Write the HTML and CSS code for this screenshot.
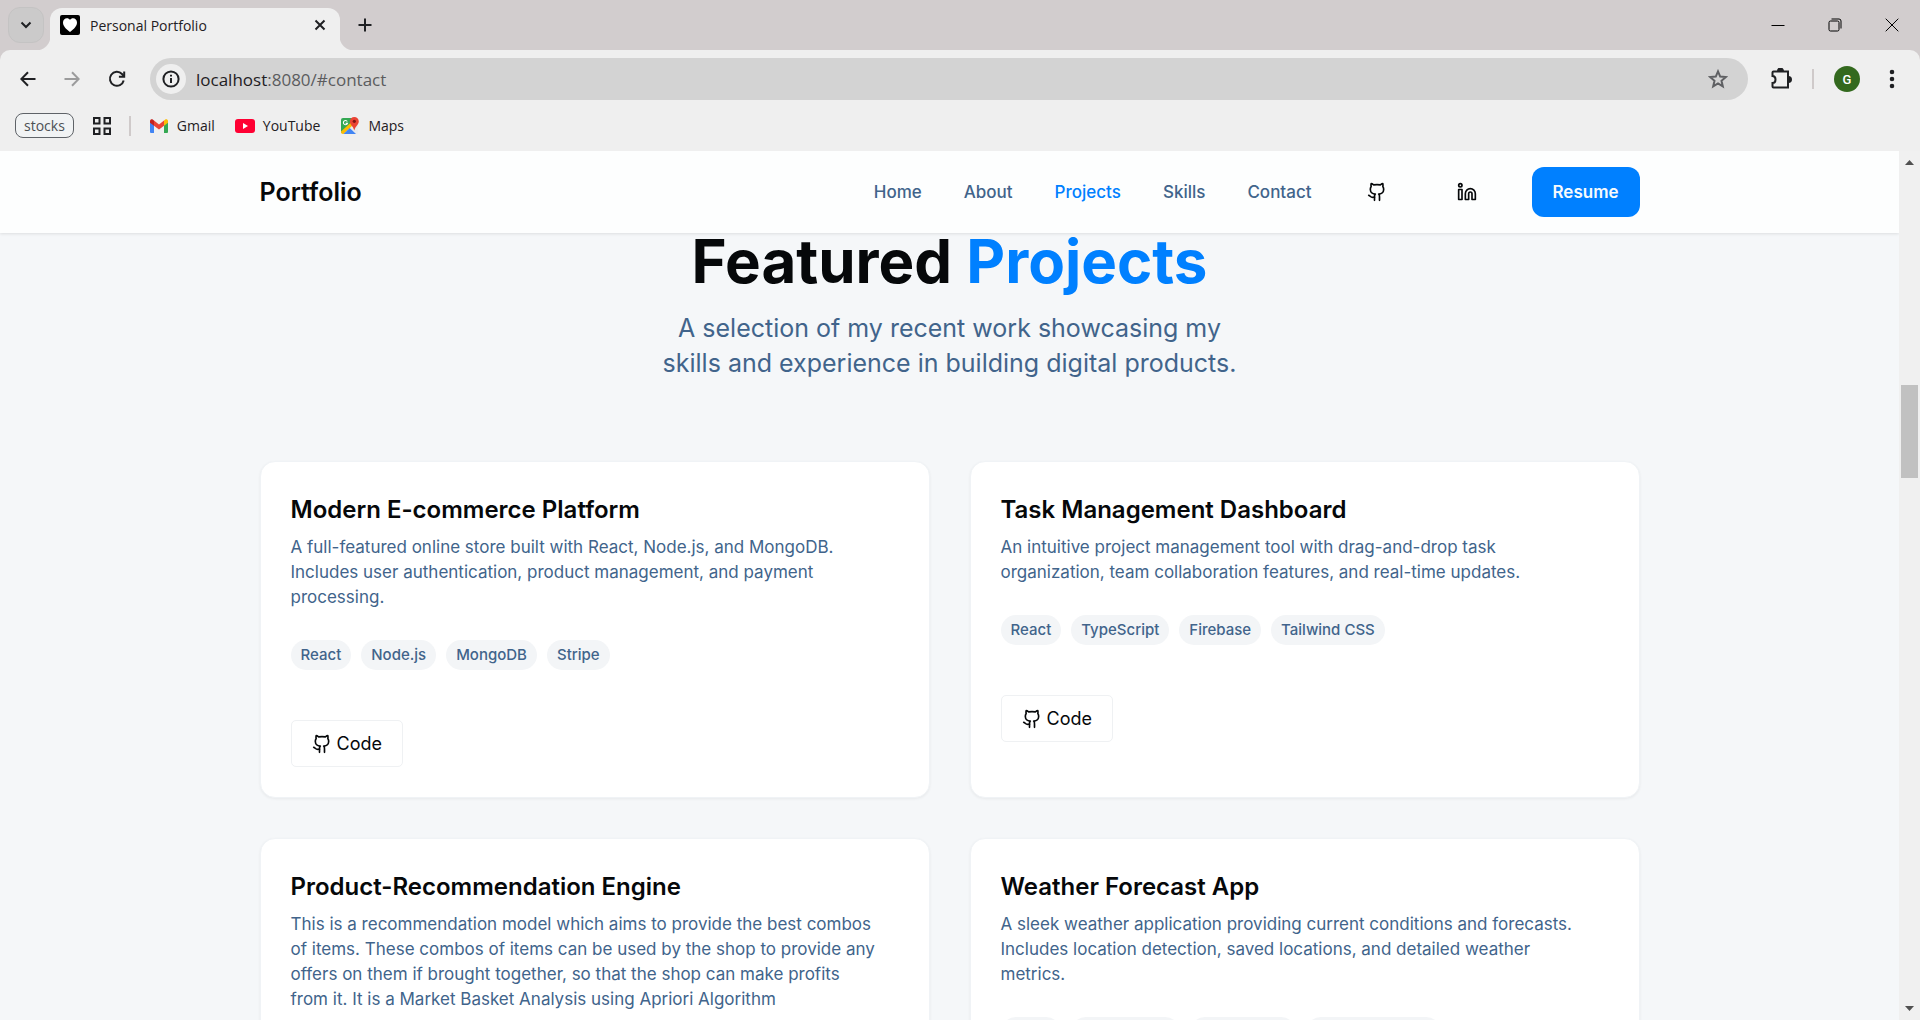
FILE: index.html
```html
<!DOCTYPE html>
<html lang="en">
<head>
<meta charset="utf-8">
<title>Personal Portfolio</title>
<link rel="stylesheet" href="styles.css">
</head>
<body>
<svg class="sprite" aria-hidden="true">
  <symbol id="github" viewBox="0 0 24 24"><path d="M15 22v-4a4.800 4.800 0 0 0-1-3.500c3 0 6-2 6-5.500.08-1.250-.27-2.480-1-3.500.28-1.150.28-2.350 0-3.500 0 0-1 0-3 1.500-2.640-.5-5.360-.5-8 0C6 2 5 2 5 2c-.3 1.150-.3 2.350 0 3.500A5.403 5.403 0 0 0 4 9c0 3.500 3 5.500 6 5.500-.39.490-.68 1.050-.85 1.650-.17.600-.22 1.230-.15 1.850v4"/><path d="M9 18c-4.510 2-5-2-7-2"/></symbol>
</svg>
<div class="browser">
  <div class="tabstrip">
    <button class="tab-search" aria-label="Search tabs"><svg width="12" height="12" viewBox="0 0 12 12"><path d="M1.500 3.500 6 8l4.500-4.500"/></svg></button>
    <div class="tab">
      <svg class="favicon" width="20" height="20" viewBox="0 0 20 20"><rect width="20" height="20" rx="2"/><path d="M10 17C5.500 13.500 3 11 3 7.500 3 5 4.800 3.200 6.900 3.200c1.300 0 2.400.6 3.100 1.600.7-1 1.800-1.600 3.100-1.600C15.200 3.200 17 5 17 7.500c0 3.500-2.500 6-7 9.500z" fill="#fff"/></svg>
      <span class="tab-title">Personal Portfolio</span>
      <button class="icon-btn" aria-label="Close tab"><svg width="12" height="12" viewBox="0 0 12 12"><path d="M1.500 1.500l9 9M10.500 1.500l-9 9"/></svg></button>
    </div>
    <button class="icon-btn new-tab" aria-label="New tab"><svg width="14" height="14" viewBox="0 0 14 14"><path d="M7 .5v13M.5 7h13"/></svg></button>
    <div class="window-controls">
      <button aria-label="Minimize"><svg width="14" height="14" viewBox="0 0 14 14"><path d="M.5 7.500h13"/></svg></button>
      <button aria-label="Restore"><svg width="14" height="14" viewBox="0 0 14 14"><rect x="1" y="3" width="10" height="10" rx="1.500"/><path d="M3.500 1h7.500a2 2 0 0 1 2 2v7.500"/></svg></button>
      <button aria-label="Close"><svg width="14" height="14" viewBox="0 0 14 14"><path d="M.7.700l12.600 12.600M13.300.700.7 13.300"/></svg></button>
    </div>
  </div>
  <div class="toolbar">
    <div class="nav-buttons">
      <button class="icon-btn" aria-label="Back"><svg width="16" height="16" viewBox="0 0 16 16"><path d="M15.500 8H1.500M8 1.300 1.300 8 8 14.700"/></svg></button>
      <button class="icon-btn disabled" aria-label="Forward" disabled><svg width="16" height="16" viewBox="0 0 16 16"><path d="M.5 8h14M8 1.300 14.700 8 8 14.700"/></svg></button>
      <button class="icon-btn" aria-label="Reload"><svg width="18" height="18" viewBox="0 0 18 18"><path d="M15.700 10.500A7 7 0 1 1 14 4l2 2.300"/><path d="M16.200 1.500v5.300h-5.300"/></svg></button>
    </div>
    <div class="omnibox">
      <button class="site-info" aria-label="Site information"><svg width="18" height="18" viewBox="0 0 18 18"><circle cx="9" cy="9" r="7.600"/><path d="M9 8v5M9 4.800v1.800"/></svg></button>
      <a class="url" href="#contact">localhost<span>:8080/#contact</span></a>
      <button class="icon-btn star" aria-label="Bookmark this tab"><svg width="20" height="20" viewBox="0 0 20 20"><path d="M10 2.400l2.200 5.200 5.600.5-4.300 3.700 1.300 5.500-4.800-2.900-4.800 2.900 1.300-5.500L2.200 8.100l5.600-.5z"/></svg></button>
    </div>
    <button class="icon-btn" aria-label="Extensions"><svg width="22" height="22" viewBox="0 0 22 22"><path d="M3.500 3.500h14.500v16H3.500a1 1 0 0 1-1-1v-3.500c4 0 4-7 0-7V4.500a1 1 0 0 1 1-1z"/><path class="solid" d="M8 3a2.500 2.500 0 0 1 5 0zM18.500 9a2.500 2.500 0 0 1 0 5z"/></svg></button>
    <span class="divider"></span>
    <button class="avatar" aria-label="Profile">G</button>
    <button class="icon-btn" aria-label="Menu"><svg width="20" height="20" viewBox="0 0 20 20"><g class="solid"><circle cx="10" cy="3" r="1.300"/><circle cx="10" cy="10" r="1.300"/><circle cx="10" cy="17" r="1.300"/></g></svg></button>
  </div>
  <div class="bookmarks">
    <button class="group">stocks</button>
    <svg class="apps" width="18" height="18" viewBox="0 0 18 18"><path d="M1 1h5.500v5.500H1zM11.500 1H17v5.500h-5.500zM1 11.500h5.500V17H1zM11.500 11.500H17V17h-5.500z"/></svg>
    <span class="divider"></span>
    <a href="#gmail"><svg width="20" height="20" viewBox="0 0 20 20"><path fill="#4285f4" d="M1 5v11a1 1 0 0 0 1 1h3V9z"/><path fill="#34a853" d="M19 5v11a1 1 0 0 1-1 1h-3V9z"/><path fill="#ea4335" d="M5 4.500v5.200l5 3.700 5-3.700V4.500l-5 3.900z"/><path fill="#c5221f" d="M1 5.300C1 3.300 3 2.900 4 3.700l1 .8v5.200L1 6.700z"/><path fill="#fbbc04" d="M19 5.300c0-2-2-2.400-3-1.600l-1 .8v5.200l4-3z"/></svg>Gmail</a>
    <a href="#youtube"><svg width="20" height="20" viewBox="0 0 20 20"><rect y="3" width="20" height="14" rx="3" fill="#ff0033"/><path d="M8 7v6l5-3z" fill="#fff"/></svg>YouTube</a>
    <a href="#maps"><svg width="20" height="20" viewBox="0 0 20 20"><rect x="1" y="2" width="17" height="16" rx="2" fill="#e8eaed"/><path fill="#34a853" d="M1 4a2 2 0 0 1 2-2h9l-1 7-10 8z"/><path fill="#fbbc04" d="M1 15.500 11.500 6l2 2.500L3.500 18H3a2 2 0 0 1-2-2z"/><path fill="#4285f4" d="M3.500 18 9.700 12 16 18z"/><path d="M7.300 5.500A2.100 2.100 0 1 0 7.500 7.300H5.600" fill="none" stroke="#fff" stroke-width="1.100"/><path fill="#ea4335" d="M14.300 1a4.500 4.500 0 0 0-4.500 4.500c0 3.200 3.300 4.300 4.500 9 1.200-4.700 4.500-5.800 4.500-9A4.500 4.500 0 0 0 14.300 1z"/><circle cx="14.300" cy="5.300" r="1.600" fill="#811411"/></svg>Maps</a>
  </div>
  <div class="viewport">
    <div class="page">
      <header class="site-header">
        <div class="container header-row">
          <a class="brand" href="#home">Portfolio</a>
          <div class="header-actions">
            <nav class="site-nav">
              <a href="#home">Home</a>
              <a href="#about">About</a>
              <a class="active" href="#projects">Projects</a>
              <a href="#skills">Skills</a>
              <a href="#contact">Contact</a>
            </nav>
            <a class="social" href="#github" aria-label="GitHub"><svg class="line-icon" width="20" height="20"><use href="#github"/></svg></a>
            <a class="social" href="#linkedin" aria-label="LinkedIn"><svg class="line-icon" width="20" height="20" viewBox="0 0 24 24"><path d="M16 8a6 6 0 0 1 6 6v7h-4v-7a2 2 0 0 0-2-2 2 2 0 0 0-2 2v7h-4v-7a6 6 0 0 1 6-6z"/><rect width="4" height="12" x="2" y="9"/><circle cx="4" cy="4" r="2"/></svg></a>
            <button class="resume">Resume</button>
          </div>
        </div>
      </header>
      <main class="container projects">
        <h1>Featured <span>Projects</span></h1>
        <p class="lead">A selection of my recent work showcasing my skills and experience in building digital products.</p>
        <div class="grid">
          <article class="card">
            <h2>Modern E-commerce Platform</h2>
            <p>A full-featured online store built with React, Node.js, and MongoDB. Includes user authentication, product management, and payment processing.</p>
            <ul class="tags"><li>React</li><li>Node.js</li><li>MongoDB</li><li>Stripe</li></ul>
            <button class="code"><svg class="line-icon" width="20" height="20"><use href="#github"/></svg>Code</button>
          </article>
          <article class="card">
            <h2>Task Management Dashboard</h2>
            <p>An intuitive project management tool with drag-and-drop task organization, team collaboration features, and real-time updates.</p>
            <ul class="tags"><li>React</li><li>TypeScript</li><li>Firebase</li><li>Tailwind CSS</li></ul>
            <button class="code"><svg class="line-icon" width="20" height="20"><use href="#github"/></svg>Code</button>
          </article>
          <article class="card">
            <h2>Product-Recommendation Engine</h2>
            <p>This is a recommendation model which aims to provide the best combos of items. These combos of items can be used by the shop to provide any offers on them if brought together, so that the shop can make profits from it. It is a Market Basket Analysis using Apriori Algorithm</p>
          </article>
          <article class="card">
            <h2>Weather Forecast App</h2>
            <p>A sleek weather application providing current conditions and forecasts. Includes location detection, saved locations, and detailed weather metrics.</p>
            <ul class="tags"><li>React</li><li>Weather API</li><li>Geolocation</li><li>CSS Animations</li></ul>
          </article>
        </div>
      </main>
    </div>
    <div class="scrollbar">
      <svg width="21" height="21" viewBox="0 0 21 21"><path d="M6 14h9l-4.500-5z"/></svg>
      <span class="track before"></span>
      <span class="thumb"></span>
      <span class="track after"></span>
      <svg width="21" height="21" viewBox="0 0 21 21"><path d="M6 7h9l-4.500 5z"/></svg>
    </div>
  </div>
</div>
</body>
</html>
```
FILE: styles.css
```css
* { box-sizing: border-box; }
body { margin: 0; font-family: Inter, sans-serif; }
button { border: 0; padding: 0; background: none; font: inherit; color: inherit; }
a { color: inherit; text-decoration: none; }
.sprite { display: none; }

.browser {
  display: flex;
  flex-direction: column;
  height: 100vh;
  overflow: hidden;
  background: #d2cdce;
}
.tabstrip, .toolbar, .bookmarks { font-family: "Open Sans", sans-serif; color: #1f2023; flex: none; }

/* Tab strip */
.tabstrip { display: flex; align-items: center; height: 50px; padding-left: 8px; }
.tab-search {
  display: grid;
  place-items: center;
  width: 36px;
  height: 36px;
  border: 1px solid #c4c3c3;
  border-radius: 12px;
  background: #cbcaca;
}
.tabstrip svg, .icon-btn svg, .site-info svg, .apps { fill: none; stroke: #1f2023; stroke-width: 2; }
.tab {
  position: relative;
  display: flex;
  align-items: center;
  align-self: flex-end;
  gap: 10px;
  width: 290px;
  height: 42px;
  margin-left: 6px;
  padding: 0 14px 8px 10px;
  border-radius: 12px 12px 0 0;
  background: #efefef;
}
.tab::before, .tab::after { content: ""; position: absolute; bottom: 0; width: 14px; height: 14px; }
.tab::before { right: 100%; background: radial-gradient(circle at 0 0, transparent 14px, #efefef 15px); }
.tab::after { left: 100%; background: radial-gradient(circle at 100% 0, transparent 14px, #efefef 15px); }
.tab .favicon { stroke: none; fill: #000; }
.tab-title { flex: 1; font-size: 14px; }
.icon-btn { display: grid; place-items: center; }
.new-tab { margin-left: 18px; }
.window-controls { display: flex; margin-left: auto; }
.window-controls button { display: grid; place-items: center; width: 57px; height: 48px; }
.tabstrip .window-controls svg { stroke: #000; stroke-width: 1; }

/* Toolbar */
.toolbar {
  display: flex;
  align-items: center;
  height: 58px;
  padding: 0 18px 0 20px;
  border-radius: 10px 10px 0 0;
  background: #efefef;
}
.nav-buttons { display: flex; gap: 28px; width: 130px; }
.icon-btn.disabled { opacity: .4; }
.omnibox {
  display: flex;
  align-items: center;
  flex: 1;
  height: 42px;
  margin-right: 22px;
  padding: 0 20px 0 6px;
  border-radius: 21px;
  background: #d3d3d3;
}
.site-info { display: grid; place-items: center; width: 30px; height: 30px; border-radius: 50%; background: #efefef; }
.url { flex: 1; margin-left: 10px; font-size: 17px; }
.url span { color: #5b5c5e; }
.icon-btn.star svg { stroke: #5f6063; }
.solid { fill: #1f2023; }
.divider { width: 2px; height: 20px; background: #cfcaca; }
.toolbar .divider { margin: 0 20px; }
.avatar {
  width: 26px;
  height: 26px;
  margin-right: 22px;
  border-radius: 50%;
  background: #33691e;
  color: #fff;
  font: 500 13px Roboto, sans-serif;
}

/* Bookmarks bar */
.bookmarks { display: flex; align-items: center; height: 43px; padding: 0 15px 8px; background: #efefef; font-size: 14px; }
.group { height: 25px; padding: 0 8px; border: 1px solid #5f6368; border-radius: 8px; background: #f1f3f4; color: #4c5054; line-height: 20px; }
.apps { margin: 0 18px 0 19px; }
.bookmarks a { display: flex; align-items: center; gap: 8px; margin-left: 20px; }
.bookmarks .divider { margin-right: -2px; }

/* Viewport */
.viewport { display: flex; flex: 1; min-height: 0; }
.page { position: relative; flex: 1; overflow: hidden; background: #f5f7f9; }
.container { width: 100%; max-width: 1440px; margin: 0 auto; padding: 0 30px; }
.site-header {
  position: absolute;
  top: 0;
  left: 0;
  right: 0;
  background: #fdfefe;
  box-shadow: 0 1px 3px rgba(0, 0, 0, .1);
}
.header-row { display: flex; align-items: center; justify-content: space-between; height: 82px; }
.brand { font-size: 25px; font-weight: 600; color: #06080a; }
.header-actions { display: flex; align-items: center; gap: 40px; font-size: 17px; font-weight: 500; }
.site-nav { display: flex; gap: 42px; color: #41648b; }
.active { color: #0080ff; }
.social { display: grid; place-items: center; width: 50px; height: 50px; }
.line-icon { fill: none; stroke: #06080a; stroke-width: 2; stroke-linecap: round; stroke-linejoin: round; }
.resume { min-width: 108px; height: 50px; padding: 0 20px; border-radius: 12px; background: #0080ff; color: #f7fafc; font-weight: 600; }

.projects { padding-top: 80px; }
h1 { margin: 0 0 20px; font-size: 60px; line-height: 60px; font-weight: 700; text-align: center; color: #06080a; }
h1 span { color: #0080ff; }
.lead { max-width: 600px; margin: 0 auto 80px; font-size: 25px; line-height: 35px; text-align: center; color: #41648b; }
.grid { display: grid; grid-template-columns: 1fr 1fr; gap: 40px; }
.card {
  padding: 30px;
  border: 1px solid #f0f3f6;
  border-radius: 15px;
  background: #fff;
  box-shadow: 0 1px 3px rgba(0, 0, 0, .06);
}
.card h2 { margin: 0 0 8px; font-size: 24px; line-height: 35px; font-weight: 600; color: #06080a; }
.card p { margin: 0; padding-right: 20px; font-size: 17px; line-height: 25px; color: #41648b; }
.tags { display: flex; gap: 10px; margin: 30px 0 50px; padding: 0; list-style: none; }
.tags li { padding: 5px 10px; border-radius: 15px; background: #f3f5f7; font-size: 15px; line-height: 20px; font-weight: 500; color: #41648b; }
.code {
  display: flex;
  align-items: center;
  gap: 5px;
  height: 47px;
  padding: 0 20px;
  border: 1px solid #eff1f3;
  border-radius: 5px;
  font-size: 18px;
  color: #06080a;
}

/* Scrollbar */
.scrollbar { display: flex; flex-direction: column; width: 21px; background: #f0f0f0; }
.scrollbar svg { fill: #505050; }
.thumb { margin: 0 2px; background: #c1c1c1; flex: 93; }
.before { flex: 213; }
.after { flex: 521; }
```
